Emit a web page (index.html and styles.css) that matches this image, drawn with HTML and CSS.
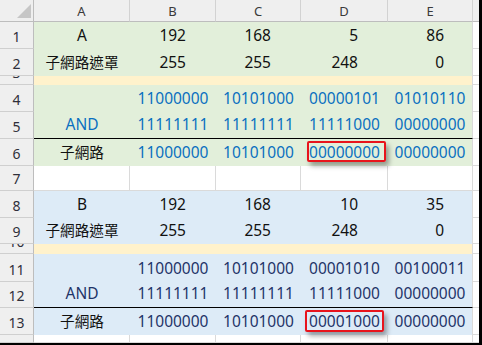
FILE: index.html
```html
<!DOCTYPE html>
<html lang="zh-Hant">
<head>
<meta charset="utf-8">
<title>子網路遮罩</title>
<link rel="stylesheet" href="styles.css">
</head>
<body>
<div class="frame">
  <div class="sheet">
    <!-- header -->
    <div class="corner"><span class="tri"></span></div>
    <div class="hd">A</div><div class="hd">B</div><div class="hd">C</div><div class="hd">D</div><div class="hd">E</div><div class="hd f"></div>

    <!-- row 1 -->
    <div class="rh">1</div>
    <div class="c g ctr">A</div><div class="c g num">192</div><div class="c g num">168</div><div class="c g num">5</div><div class="c g e num">86</div><div class="c f"></div>
    <!-- row 2 -->
    <div class="rh">2</div>
    <div class="c g ctr"><span class="cjk">子網路遮罩</span></div><div class="c g num">255</div><div class="c g num">255</div><div class="c g num">248</div><div class="c g e num">0</div><div class="c f"></div>
    <!-- row 3 -->
    <div class="rh">3</div>
    <div class="c o"></div><div class="c o"></div><div class="c o"></div><div class="c o"></div><div class="c o e"></div><div class="c f"></div>
    <!-- row 4 -->
    <div class="rh">4</div>
    <div class="c g"></div><div class="c g ctr blue">11000000</div><div class="c g ctr blue">10101000</div><div class="c g ctr blue">00000101</div><div class="c g e ctr blue">01010110</div><div class="c f"></div>
    <!-- row 5 -->
    <div class="rh">5</div>
    <div class="c g line ctr blue">AND</div><div class="c g line ctr blue">11111111</div><div class="c g line ctr blue">11111111</div><div class="c g line ctr blue">11111000</div><div class="c g e line ctr blue">00000000</div><div class="c f"></div>
    <!-- row 6 -->
    <div class="rh">6</div>
    <div class="c g ctr"><span class="cjk">子網路</span></div><div class="c g ctr blue">11000000</div><div class="c g ctr blue">10101000</div><div class="c g ctr blue mark">00000000<span class="box"></span></div><div class="c g e ctr blue">00000000</div><div class="c f"></div>
    <!-- row 7 -->
    <div class="rh">7</div>
    <div class="c"></div><div class="c"></div><div class="c"></div><div class="c"></div><div class="c"></div><div class="c f"></div>
    <!-- row 8 -->
    <div class="rh">8</div>
    <div class="c b ctr">B</div><div class="c b num">192</div><div class="c b num">168</div><div class="c b num">10</div><div class="c b e num">35</div><div class="c f"></div>
    <!-- row 9 -->
    <div class="rh">9</div>
    <div class="c b ctr"><span class="cjk">子網路遮罩</span></div><div class="c b num">255</div><div class="c b num">255</div><div class="c b num">248</div><div class="c b e num">0</div><div class="c f"></div>
    <!-- row 10 -->
    <div class="rh">10</div>
    <div class="c o"></div><div class="c o"></div><div class="c o"></div><div class="c o"></div><div class="c o e"></div><div class="c f"></div>
    <!-- row 11 -->
    <div class="rh">11</div>
    <div class="c b"></div><div class="c b ctr navy">11000000</div><div class="c b ctr navy">10101000</div><div class="c b ctr navy">00001010</div><div class="c b e ctr navy">00100011</div><div class="c f"></div>
    <!-- row 12 -->
    <div class="rh">12</div>
    <div class="c b line ctr navy">AND</div><div class="c b line ctr navy">11111111</div><div class="c b line ctr navy">11111111</div><div class="c b line ctr navy">11111000</div><div class="c b e line ctr navy">00000000</div><div class="c f"></div>
    <!-- row 13 -->
    <div class="rh">13</div>
    <div class="c b ctr"><span class="cjk">子網路</span></div><div class="c b ctr navy">11000000</div><div class="c b ctr navy">10101000</div><div class="c b ctr navy mark">00001000<span class="box box2"></span></div><div class="c b e ctr navy">00000000</div><div class="c f"></div>
    <!-- row 14 (partial) -->
    <div class="rh"></div>
    <div class="c"></div><div class="c"></div><div class="c"></div><div class="c"></div><div class="c"></div><div class="c f"></div>
  </div>
</div>
</body>
</html>
```

FILE: styles.css
```css
html, body {
  margin: 0;
  padding: 0;
  background: #ffffff;
}

.frame {
  width: 482px;
  height: 345px;
  box-sizing: border-box;
  border-right: 3px solid #000;
  border-bottom: 2px solid #000;
  overflow: hidden;
  background: #fff;
}

.sheet {
  display: grid;
  grid-template-columns: 34px 96px 86px 85px 87px 85px 6px;
  grid-template-rows: 22px 27px 27px 9px 27px 27px 27px 25px 27px 26px 10px 28px 26px 27px 8px;
  font-family: "Noto Sans", "Noto Sans CJK TC", sans-serif;
  font-size: 15.5px;
  color: #111;
}

.sheet > div {
  box-sizing: border-box;
  overflow: hidden;
  white-space: nowrap;
}

.corner {
  background: #efefef;
  border-right: 1px solid #bdbdbd;
  border-bottom: 1px solid #bdbdbd;
  position: relative;
}

.tri {
  position: absolute;
  right: 2px;
  bottom: 3px;
  width: 0;
  height: 0;
  border-left: 14px solid transparent;
  border-bottom: 14px solid #c6c6c6;
}

.hd {
  background: #efefef;
  border-right: 1px solid #d2d2d2;
  border-bottom: 1px solid #bdbdbd;
  display: flex;
  align-items: center;
  justify-content: center;
  font-size: 13px;
  line-height: 16px;
  color: #3a3a3a;
}

.hd.f {
  border-right: none;
}

.rh {
  background: #efefef;
  border-right: 1px solid #bdbdbd;
  border-bottom: 1px solid #cfcfcf;
  display: flex;
  align-items: flex-end;
  justify-content: center;
  font-size: 14px;
  line-height: 16px;
  padding-bottom: 3px;
  color: #2f2f3a;
}

.c {
  border-right: 1px solid #dadada;
  border-bottom: 1px solid #dadada;
  display: flex;
  align-items: flex-end;
  line-height: 20px;
  padding-bottom: 4px;
}

.c.g, .c.b, .c.o {
  border-right: none;
  border-bottom: none;
}

.c.g.e, .c.b.e, .c.o.e {
  border-right: 1px solid #dadada;
}

.g { background: #e2efda; }
.b { background: #ddebf7; }
.o { background: #fff2cc; }

.c.line {
  border-bottom: 1px solid #000;
}

.ctr { justify-content: center; }

.num {
  justify-content: flex-end;
  padding-right: 30px;
}

.e.num { padding-right: 28px; }

.blue { color: #0a70c0; }
.navy { color: #1f3468; }

.cjk {
  font-size: 14.6px;
}

.c.f {
  border-right: none;
}

.mark {
  position: relative;
  overflow: visible !important;
}

.sheet > .mark {
  overflow: visible;
  z-index: 2;
}

.box {
  position: absolute;
  left: 6px;
  top: 2px;
  width: 79px;
  height: 21px;
  box-sizing: border-box;
  border: 2px solid #e8141c;
  border-radius: 2px;
  box-shadow: 3px 4px 5px rgba(0, 0, 0, 0.35);
}

.box2 {
  left: 4px;
  top: 2px;
  height: 22px;
}
```
